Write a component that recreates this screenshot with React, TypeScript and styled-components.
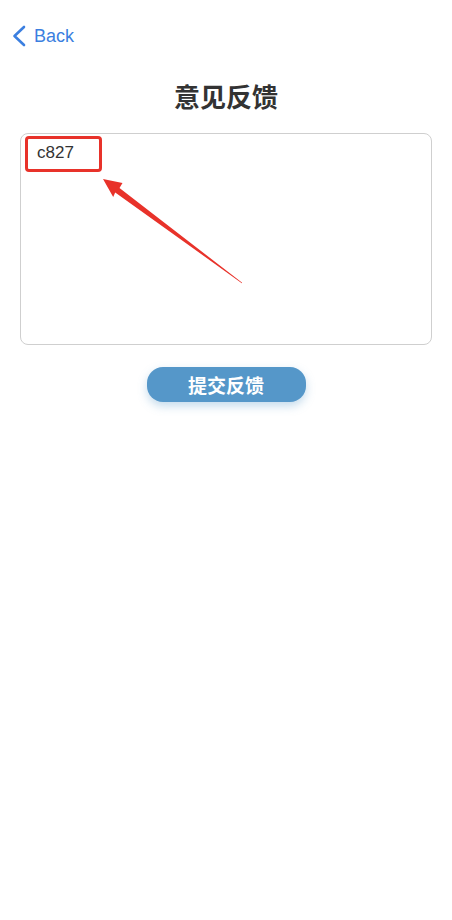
import styled, { createGlobalStyle } from 'styled-components';

const GlobalStyle = createGlobalStyle`
  html, body {
    margin: 0;
    padding: 0;
    background: #fff;
  }
  body {
    font-family: "Liberation Sans", "Noto Sans CJK SC", sans-serif;
  }
`;

const Page = styled.div`
  width: 452px;
  min-height: 920px;
  background: #fff;
  display: flex;
  flex-direction: column;
`;

const NavBar = styled.div`
  height: 44px;
  margin-top: 14px;
  padding: 0 12px;
  display: flex;
  align-items: center;
  gap: 8px;
  color: #3b7fe0;
  font-size: 18px;
`;

const Title = styled.h1`
  margin: 20px 0 0;
  font-family: "Noto Sans CJK SC", sans-serif;
  font-size: 26px;
  line-height: 36px;
  font-weight: 700;
  color: #333;
  text-align: center;
`;

const Field = styled.div`
  position: relative;
  margin: 19px 20px 0;
  height: 212px;
`;

const TextArea = styled.textarea`
  box-sizing: border-box;
  width: 100%;
  height: 100%;
  border: 1px solid #cfcfcf;
  border-radius: 8px;
  padding: 7px 16px;
  font-family: "Liberation Sans", "Noto Sans CJK SC", sans-serif;
  font-size: 17px;
  line-height: 24px;
  color: #333;
  resize: none;
  outline: none;
  background: #fff;
`;

const Highlight = styled.div`
  position: absolute;
  left: 5px;
  top: 3px;
  width: 77px;
  height: 36px;
  box-sizing: border-box;
  border: 3px solid #e8322a;
  border-radius: 4px;
  pointer-events: none;
`;

const Arrow = styled.svg`
  position: absolute;
  left: 0;
  top: 0;
  pointer-events: none;
`;

const SubmitButton = styled.button`
  align-self: center;
  margin-top: 22px;
  width: 159px;
  height: 35px;
  border: none;
  border-radius: 16px;
  background: #5597c9;
  color: #fff;
  font-family: "Noto Sans CJK SC", sans-serif;
  font-size: 19px;
  font-weight: 700;
  box-shadow: 0 4px 10px rgba(85, 151, 201, 0.35);
  cursor: pointer;
`;

export default function App() {
  return (
    <Page>
      <GlobalStyle />
      <NavBar>
        <svg width="14" height="22" viewBox="0 0 14 22" fill="none">
          <polyline
            points="12,2 2.5,11 12,20"
            stroke="#3b7fe0"
            strokeWidth="2.6"
            strokeLinecap="round"
            strokeLinejoin="round"
          />
        </svg>
        Back
      </NavBar>
      <Title>意见反馈</Title>
      <Field>
        <TextArea defaultValue="c827" />
        <Highlight />
        <Arrow width="240" height="160" viewBox="0 0 240 160">
          <polygon
            points="83,46 102.5,50 99.5,55 222.2,149.8 221.8,150.2 95.2,59.4 93.2,64"
            fill="#e8322a"
          />
        </Arrow>
      </Field>
      <SubmitButton>提交反馈</SubmitButton>
    </Page>
  );
}
